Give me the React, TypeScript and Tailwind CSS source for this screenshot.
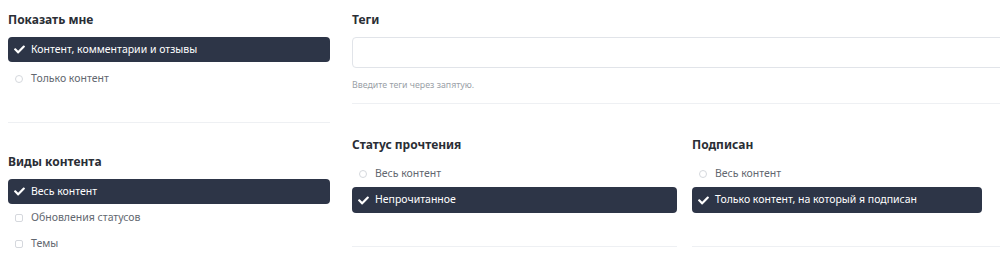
import React from 'react';
import { FaCheck } from 'react-icons/fa';

type Option = { label: string; selected?: boolean };
type Kind = 'radio' | 'checkbox';

const Selected: React.FC<{ label: string; className?: string }> = ({ label, className = '' }) => (
  <div className={`flex h-[25px] items-center rounded-[4px] bg-[#2d3547] pl-[6px] text-white ${className}`}>
    <FaCheck className="h-[11px] w-[11px] shrink-0" />
    <span className="ml-[6px] text-[10.5px]">{label}</span>
  </div>
);

const Unselected: React.FC<{ label: string; kind: Kind }> = ({ label, kind }) => (
  <div className="flex h-[25px] items-center pl-[7px] text-[#62676f]">
    {kind === 'radio' ? (
      <span className="h-[8px] w-[8px] shrink-0 rounded-full border border-[#d5d8dd]" />
    ) : (
      <span className="h-[8px] w-[8px] shrink-0 rounded-[2px] border border-[#d5d8dd]" />
    )}
    <span className="ml-[8px] text-[10.5px]">{label}</span>
  </div>
);

const OptionList: React.FC<{ options: Option[]; kind: Kind; pillClass?: string }> = ({ options, kind, pillClass }) => (
  <div className="flex flex-col gap-[1px]">
    {options.map((o) =>
      o.selected ? (
        <Selected key={o.label} label={o.label} className={pillClass} />
      ) : (
        <Unselected key={o.label} label={o.label} kind={kind} />
      )
    )}
  </div>
);

const Heading: React.FC<{ children: React.ReactNode }> = ({ children }) => (
  <h3 className="text-[12px] font-bold leading-[20px] text-[#2a2e35]">{children}</h3>
);

export default function App() {
  return (
    <div className="h-[260px] w-[1000px] overflow-hidden bg-white" style={{ fontFamily: '"Noto Sans", "Open Sans", sans-serif' }}>
      <div className="flex w-[1040px]">
        {/* Left column */}
        <div className="ml-[8px] w-[322px] shrink-0">
          <div className="border-b border-[#eef0f3] pt-[10px] pb-[31px]">
            <Heading>Показать мне</Heading>
            <div className="mt-[7px]">
              <Selected label="Контент, комментарии и отзывы" />
              <div className="mt-[4px]">
                <Unselected label="Только контент" kind="radio" />
              </div>
            </div>
          </div>
          <div className="pt-[29px]">
            <Heading>Виды контента</Heading>
            <div className="mt-[7px]">
              <OptionList
                kind="checkbox"
                options={[
                  { label: 'Весь контент', selected: true },
                  { label: 'Обновления статусов' },
                  { label: 'Темы' },
                ]}
              />
            </div>
          </div>
        </div>

        {/* Right area */}
        <div className="ml-[22px] flex-1">
          <div className="border-b border-[#eef0f3] pt-[10px] pb-[11px]">
            <Heading>Теги</Heading>
            <input
              type="text"
              className="mt-[7px] block h-[31px] w-full rounded-[4px] border border-[#e1e4e9] px-2 text-[12px] outline-none"
            />
            <p className="mt-[10px] text-[8.8px] leading-[14px] text-[#9a9fa7]">Введите теги через запятую.</p>
          </div>

          <div className="flex gap-[15px]">
            <div className="w-[325px] shrink-0 border-b border-[#eef0f3] pt-[31px] pb-[33px]">
              <Heading>Статус прочтения</Heading>
              <div className="mt-[6px]">
                <OptionList
                  kind="radio"
                  pillClass="h-[26px]"
                  options={[{ label: 'Весь контент' }, { label: 'Непрочитанное', selected: true }]}
                />
              </div>
            </div>
            <div className="flex-1 border-b border-[#eef0f3] pt-[31px] pb-[33px]">
              <Heading>Подписан</Heading>
              <div className="mt-[6px]">
                <OptionList
                  kind="radio"
                  pillClass="h-[26px] w-[290px]"
                  options={[
                    { label: 'Весь контент' },
                    { label: 'Только контент, на который я подписан', selected: true },
                  ]}
                />
              </div>
            </div>
          </div>
        </div>
      </div>
    </div>
  );
}
